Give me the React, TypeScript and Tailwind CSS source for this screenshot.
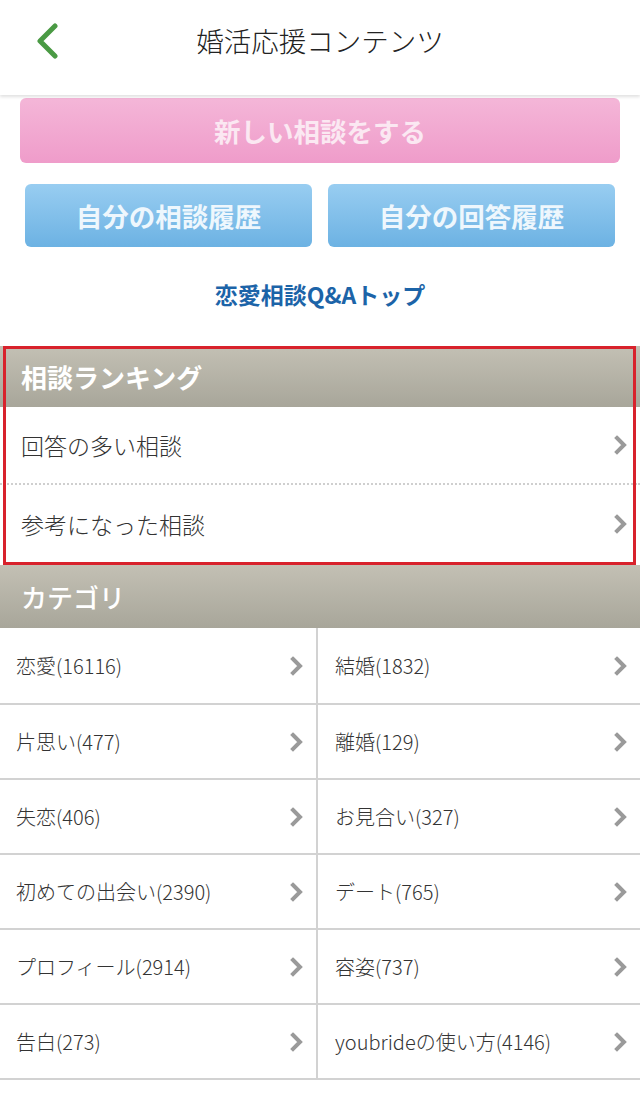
import React from "react";

const font = { fontFamily: '"Noto Sans CJK JP", "Noto Sans", sans-serif' };

function Chevron({ className = "" }: { className?: string }) {
  return (
    <svg width="14" height="20" viewBox="0 0 14 20" className={className}>
      <polyline points="3,3 10,10 3,17" fill="none" stroke="#9a9a9a" strokeWidth="4" strokeLinecap="square" />
    </svg>
  );
}

const categories: [string, string][] = [
  ["恋愛(16116)", "結婚(1832)"],
  ["片思い(477)", "離婚(129)"],
  ["失恋(406)", "お見合い(327)"],
  ["初めての出会い(2390)", "デート(765)"],
  ["プロフィール(2914)", "容姿(737)"],
  ["告白(273)", "youbrideの使い方(4146)"],
];

export default function App() {
  return (
    <div className="w-[640px] h-[1097px] bg-white overflow-hidden text-[#333]" style={font}>
      {/* Header */}
      <div className="relative z-10 h-[95px] bg-white shadow-[0_2px_3px_rgba(0,0,0,0.12)] grid grid-cols-[1fr_auto_1fr] items-start">
        <div className="pt-[23px] pl-[35px]">
          <svg width="26" height="36" viewBox="0 0 26 36">
            <polyline points="20,3 5,18 20,33" fill="none" stroke="#4a9a44" strokeWidth="5" strokeLinecap="round" strokeLinejoin="round" />
          </svg>
        </div>
        <div className="pt-[20px] text-[27.5px] leading-[40px] font-light text-[#222]">婚活応援コンテンツ</div>
        <div />
      </div>

      {/* Pink button */}
      <div className="px-[20px] pt-[3px]">
        <div className="h-[65px] rounded-[6px] bg-gradient-to-b from-[#f4b6d8] to-[#ef9cca] flex items-center justify-center text-[26.5px] font-bold text-[#fbe8f2]">
          新しい相談をする
        </div>
      </div>

      {/* Blue buttons */}
      <div className="px-[25px] pt-[21px] flex gap-[16px]">
        <div className="flex-1 h-[63px] rounded-[6px] bg-gradient-to-b from-[#98cdf1] to-[#6cb2e3] flex items-center justify-center text-[26.5px] font-bold text-[#eef7fd]">
          自分の相談履歴
        </div>
        <div className="flex-1 h-[63px] rounded-[6px] bg-gradient-to-b from-[#98cdf1] to-[#6cb2e3] flex items-center justify-center text-[26.5px] font-bold text-[#eef7fd]">
          自分の回答履歴
        </div>
      </div>

      {/* Link */}
      <div className="h-[99px] flex items-start justify-center pt-[31px]">
        <span className="text-[23px] font-bold text-[#1c64a8] leading-[32px]">恋愛相談Q&amp;Aトップ</span>
      </div>

      {/* Ranking */}
      <div className="relative">
        <div className="h-[61px] bg-gradient-to-b from-[#c3c0b4] to-[#a8a69a] flex items-center pl-[21px] text-[26px] font-bold text-white">
          相談ランキング
        </div>
        <div className="h-[78px] flex items-center justify-between pl-[21px] pr-[12px] border-b-2 border-dotted border-[#cfcfcf] text-[23px] font-light">
          <span>回答の多い相談</span>
          <Chevron />
        </div>
        <div className="h-[78px] flex items-center justify-between pl-[21px] pr-[12px] text-[23px] font-light">
          <span>参考になった相談</span>
          <Chevron />
        </div>
        <div className="absolute left-[3px] right-[4px] top-0 bottom-[-2px] border-[3px] border-[#d8222c] pointer-events-none" />
      </div>

      {/* Category */}
      <div className="mt-[2px] h-[63px] bg-gradient-to-b from-[#c3c0b4] to-[#a8a69a] flex items-center pl-[21px] text-[26px] font-medium text-white">
        カテゴリ
      </div>
      <div className="border-b-2 border-[#d2d2d2]">
        {categories.map((row, i) => (
          <div key={i} className={`grid grid-cols-[318px_1fr] h-[75px] ${i > 0 ? "border-t-2 border-[#d2d2d2]" : ""}`}>
            <div className="flex items-center justify-between pl-[16px] pr-[12px] border-r-2 border-[#d2d2d2] text-[20px] font-light">
              <span>{row[0]}</span>
              <Chevron />
            </div>
            <div className="flex items-center justify-between pl-[17px] pr-[12px] text-[20px] font-light">
              <span>{row[1]}</span>
              <Chevron />
            </div>
          </div>
        ))}
      </div>
    </div>
  );
}
